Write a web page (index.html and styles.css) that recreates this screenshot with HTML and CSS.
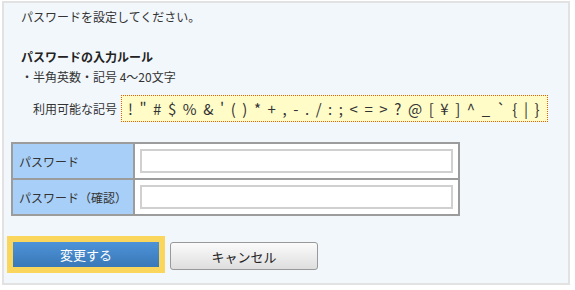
FILE: index.html
```html
<!DOCTYPE html>
<html lang="ja">
<head>
    <meta charset="UTF-8">
    <title>パスワード設定</title>
    <link rel="stylesheet" href="styles.css">
</head>
<body>
    <div class="panel">
        <p class="lead">パスワードを設定してください。</p>

        <h3 class="rule-title">パスワードの入力ルール</h3>
        <p class="rule">・半角英数・記号 4〜20文字</p>
        <div class="symbols">
            <span class="symbols-label">利用可能な記号</span>
            <span class="symbols-list">! " # $ % &amp; ' ( ) * + , - . / : ; &lt; = &gt; ? @ [ ¥ ] ^ _ ` { | }</span>
        </div>

        <table class="form-table">
            <tr>
                <th>パスワード</th>
                <td><input type="password" class="text-input"></td>
            </tr>
            <tr>
                <th>パスワード（確認）</th>
                <td><input type="password" class="text-input"></td>
            </tr>
        </table>

        <div class="actions">
            <div class="focus-ring">
                <button class="btn btn-primary">変更する</button>
            </div>
            <button class="btn btn-cancel">キャンセル</button>
        </div>
    </div>
</body>
</html>
```

FILE: styles.css
```css
body {
    margin: 0;
    font-family: "Noto Sans CJK JP", "Noto Sans", sans-serif;
    font-size: 12px;
    color: #333;
    background: #fff;
}
.panel {
    box-sizing: border-box;
    width: 568px;
    margin: 1px 0 0 2px;
    padding: 5px 7px 10px 7px;
    background: #f2f7fc;
    border: 2px solid #e2e2e2;
}
.lead {
    margin: 0 0 0 10px;
    line-height: 18px;
}
.rule-title {
    margin: 22px 0 0 10px;
    font-size: 12px;
    line-height: 18px;
    font-weight: bold;
    color: #222;
}
.rule {
    margin: 2px 0 0 10px;
    line-height: 18px;
}
.symbols {
    display: flex;
    align-items: center;
    margin: 9px 0 0 22px;
}
.symbols-label {
    width: 88px;
    line-height: 18px;
}
.symbols-list {
    box-sizing: border-box;
    width: 427px;
    height: 27px;
    padding: 0 3px 0 6px;
    line-height: 25px;
    font-size: 15px;
    letter-spacing: 1.6px;
    white-space: nowrap;
    background: #fffcc8;
    border: 1px dotted #e0600f;
}
.form-table {
    margin-top: 20px;
    width: 449px;
    border-collapse: collapse;
    border: 2px solid #9c9c9c;
}
.form-table th,
.form-table td {
    border: 2px solid #9c9c9c;
    height: 34px;
    padding: 0 5px;
}
.form-table th {
    width: 109px;
    text-align: left;
    font-weight: normal;
    background: #a8cff7;
    padding-left: 6px;
}
.form-table td {
    background: #fff;
}
.text-input {
    box-sizing: border-box;
    display: block;
    width: 313px;
    height: 24px;
    border: 2px solid #d0d0d0;
    background: #fff;
}
.actions {
    display: flex;
    align-items: flex-start;
    gap: 5px;
    margin: 20px 0 0 -4px;
}
.focus-ring {
    padding: 6px;
    background: #fad65d;
}
.btn {
    font-family: inherit;
    font-size: 13px;
    cursor: pointer;
}
.btn-primary {
    display: block;
    width: 146px;
    height: 25px;
    border: none;
    color: #fff;
    background: linear-gradient(#4d93d9, #3a78b7);
}
.btn-cancel {
    margin-top: 6px;
    width: 148px;
    height: 28px;
    color: #222;
    border: 1px solid #999;
    border-radius: 3px;
    background: linear-gradient(#fbfbfb, #dedede);
}
```
